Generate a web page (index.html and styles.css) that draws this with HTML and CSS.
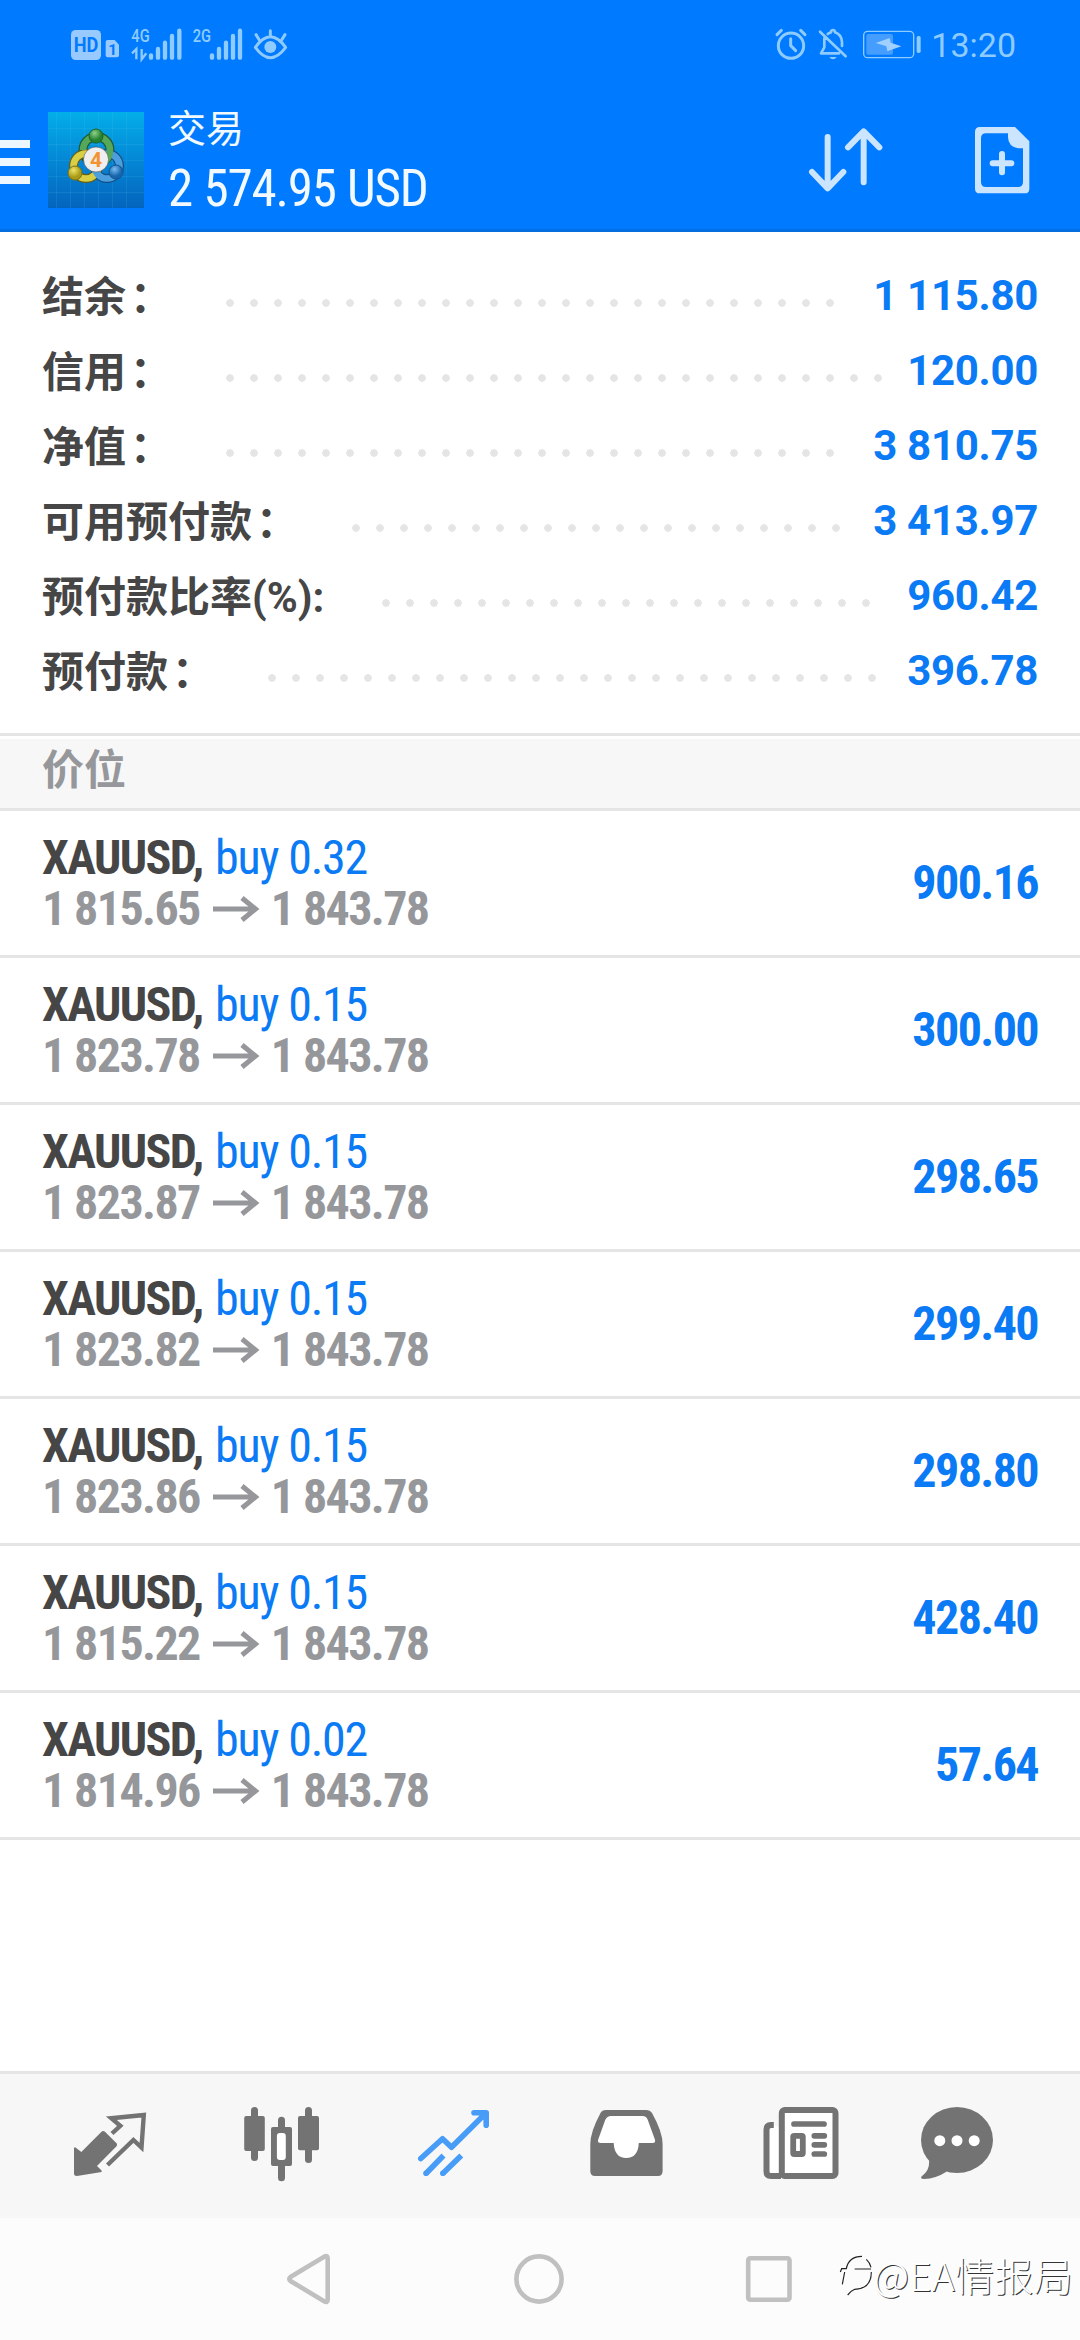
FILE: index.html
```html
<!DOCTYPE html>
<html lang="zh-CN">
<head>
    <meta charset="UTF-8">
    <meta name="viewport" content="width=device-width, initial-scale=1.0">
    <title>交易</title>
    <link rel="stylesheet" href="styles.css">
</head>
<body>
    <div class="screen">
        <header class="top">
            <div class="status-bar">
                <div class="status-left">
                    <svg class="s-hd" viewBox="213 81 90 102">
                        <rect x="213" y="90" width="90" height="90" rx="14" fill="#99caff"/>
                        <text x="258" y="155" text-anchor="middle" font-size="58" font-weight="700" textLength="74" lengthAdjust="spacingAndGlyphs" fill="#007aff">HD</text>
                    </svg>
                    <svg class="s-sim" viewBox="315 81 45 102">
                        <path d="M323 120H344L357 134V166Q357 172 351 172H323Q317 172 317 166V126Q317 120 323 120Z" fill="#99caff"/>
                        <text x="338" y="165" text-anchor="middle" font-size="46" font-weight="700" fill="#007aff">1</text>
                    </svg>
                    <svg class="s-4g" viewBox="393 81 156 102">
                        <text x="394" y="127" font-size="55" font-weight="500" textLength="55" lengthAdjust="spacingAndGlyphs" fill="#8ecbff">4G</text>
                        <path d="M396 160L409 147V178M425 147V178L439 160" fill="none" stroke="#8ecbff" stroke-width="7"/>
                        <path d="M453 166V173M474 147V173M495 128V173M516 108V173M538 92V173" stroke="#8ecbff" stroke-width="13" stroke-linecap="round"/>
                    </svg>
                    <svg class="s-2g" viewBox="576 81 156 102">
                        <text x="578" y="127" font-size="55" font-weight="500" textLength="55" lengthAdjust="spacingAndGlyphs" fill="#8ecbff">2G</text>
                        <path d="M636 166V173M657 147V173M678 128V173M699 108V173M720 92V173" stroke="#8ecbff" stroke-width="13" stroke-linecap="round"/>
                    </svg>
                    <svg class="s-eye" viewBox="759 81 105 102">
                        <path d="M766 142Q811 78 857 142Q811 204 766 142ZM768 104L778 120M811 92V106M855 104L845 120" fill="none" stroke="#8ecbff" stroke-width="9" stroke-linecap="round" stroke-linejoin="round"/>
                        <circle cx="811" cy="141" r="18" fill="#8ecbff"/>
                    </svg>
                </div>
                <div class="status-right">
                    <svg class="s-alarm" viewBox="102 81 96 102">
                        <circle cx="150" cy="137" r="38" fill="none" stroke="#8ecbff" stroke-width="9"/>
                        <path d="M149 116V137L164 152M108 104L121 91M192 104L179 91" fill="none" stroke="#8ecbff" stroke-width="9" stroke-linecap="round"/>
                    </svg>
                    <svg class="s-bell" viewBox="231 81 90 102">
                        <path d="M250 115V142L240 160H294M260 102Q265 98 270 97Q270 90 276 90Q282 90 282 97Q302 104 303 126V138M237 95L314 169" fill="none" stroke="#8ecbff" stroke-width="8" stroke-linecap="round" stroke-linejoin="round"/>
                        <path d="M265 171H287Q283 178 276 178Q269 178 265 171Z" fill="#8ecbff"/>
                    </svg>
                    <svg class="s-battery" viewBox="366 81 174 102">
                        <rect x="368" y="94" width="150" height="79" rx="12" fill="none" stroke="#8ecbff" stroke-width="4"/>
                        <rect x="376" y="102" width="80" height="62" rx="6" fill="#459dff"/>
                        <path d="M404 129L446 114L449 128L481 139L439 154L436 139Z" fill="#9fd0ff"/>
                        <rect x="527" y="108" width="12" height="51" rx="5" fill="#8ecbff"/>
                    </svg>
                    <span class="clock">13:20</span>
                </div>
            </div>
            <div class="toolbar">
                <div class="menu"><i></i><i></i><i></i></div>
                <svg class="logo" viewBox="0 0 96 96">
                    <defs>
                        <linearGradient id="sky" x1="0" y1="0" x2="0" y2="1">
                            <stop offset="0" stop-color="#03aee8"/>
                            <stop offset="0.5" stop-color="#0487d6"/>
                            <stop offset="1" stop-color="#0464bd"/>
                        </linearGradient>
                        <radialGradient id="green" cx="0.4" cy="0.3"><stop offset="0" stop-color="#8ed08a"/><stop offset="1" stop-color="#23812f"/></radialGradient>
                        <radialGradient id="yellow" cx="0.4" cy="0.3"><stop offset="0" stop-color="#efe468"/><stop offset="1" stop-color="#aa9a18"/></radialGradient>
                        <radialGradient id="blue" cx="0.4" cy="0.3"><stop offset="0" stop-color="#78bdf0"/><stop offset="1" stop-color="#1765ae"/></radialGradient>
                    </defs>
                    <rect width="96" height="96" fill="url(#sky)"/>
                    <path d="M8.500 0V96M22.500 0V96M36.500 0V96M50.500 0V96M64.500 0V96M78.500 0V96M0 16.500H96M0 32.500H96M0 48.500H96M0 64.500H96M0 80.500H96" stroke="#5cc4f0" stroke-opacity="0.14" fill="none"/>
                    <circle cx="48.500" cy="38" r="13.500" fill="none" stroke="#1e5a34" stroke-width="9"/>
                    <circle cx="38" cy="54" r="12.500" fill="none" stroke="#655f15" stroke-width="9"/>
                    <circle cx="59" cy="54" r="12.500" fill="none" stroke="#154f86" stroke-width="9"/>
                    <circle cx="38" cy="54" r="12.500" fill="none" stroke="#d9cf45" stroke-width="6.500"/>
                    <circle cx="59" cy="54" r="12.500" fill="none" stroke="#4a9fdc" stroke-width="6.500"/>
                    <path d="M35 38A13.500 13.500 0 0 1 62 38Q62 46 56 50" fill="none" stroke="#55a85a" stroke-width="6.500"/>
                    <circle cx="48" cy="24" r="7" fill="url(#green)" stroke="#1c6427"/>
                    <circle cx="27" cy="61" r="7" fill="url(#yellow)" stroke="#7d7312"/>
                    <circle cx="68" cy="60" r="7" fill="url(#blue)" stroke="#14548f"/>
                    <circle cx="48" cy="47.500" r="12.500" fill="#efefef" stroke="#555" stroke-width="0.600"/>
                    <text x="48" y="55" text-anchor="middle" font-size="21" font-weight="700" fill="#f39331">4</text>
                </svg>
                <div class="title">
                    <div class="title-name">交易</div>
                    <div class="title-sum condensed">2 574.95 USD</div>
                </div>
                <svg class="sort" viewBox="208 380 222 198">
                    <path d="M264 410V560M217 515L264 564L311 515M372 546V396M325 441L372 393L419 441" fill="none" stroke="#cce5ff" stroke-width="18" stroke-linecap="round" stroke-linejoin="round"/>
                </svg>
                <svg class="new-order" viewBox="702 377 168 204">
                    <path fill-rule="evenodd" d="M720 380H825L868 423V565Q868 579 854 579H720Q705 579 705 565V395Q705 380 720 380ZM738 399Q723 399 723 414V545Q723 560 738 560H834Q849 560 849 545V444H835Q805 440 804 411V399Z" fill="#cce5ff"/>
                    <path d="M786 461V516M758 489H814" stroke="#cce5ff" stroke-width="18" stroke-linecap="round"/>
                </svg>
            </div>
        </header>

        <section class="account">
            <div class="line"><span class="label">结余<span class="colon">：</span></span><i class="dots"></i><span class="amount">1 115.80</span></div>
            <div class="line"><span class="label">信用<span class="colon">：</span></span><i class="dots"></i><span class="amount">120.00</span></div>
            <div class="line"><span class="label">净值<span class="colon">：</span></span><i class="dots"></i><span class="amount">3 810.75</span></div>
            <div class="line"><span class="label">可用预付款<span class="colon">：</span></span><i class="dots"></i><span class="amount">3 413.97</span></div>
            <div class="line"><span class="label">预付款比率(%):</span><i class="dots"></i><span class="amount">960.42</span></div>
            <div class="line"><span class="label">预付款<span class="colon">：</span></span><i class="dots"></i><span class="amount">396.78</span></div>
        </section>

        <h2 class="section-title">价位</h2>

        <ul class="positions">
            <li class="position">
                <div class="info condensed">
                    <div><b>XAUUSD,</b> <span class="side">buy 0.32</span></div>
                    <div class="prices">1 815.65<svg class="arrow" viewBox="0 0 46 26"><path d="M0 13H43M29 2L42.500 13L29 24"/></svg>1 843.78</div>
                </div>
                <div class="profit condensed">900.16</div>
            </li>
            <li class="position">
                <div class="info condensed">
                    <div><b>XAUUSD,</b> <span class="side">buy 0.15</span></div>
                    <div class="prices">1 823.78<svg class="arrow" viewBox="0 0 46 26"><path d="M0 13H43M29 2L42.500 13L29 24"/></svg>1 843.78</div>
                </div>
                <div class="profit condensed">300.00</div>
            </li>
            <li class="position">
                <div class="info condensed">
                    <div><b>XAUUSD,</b> <span class="side">buy 0.15</span></div>
                    <div class="prices">1 823.87<svg class="arrow" viewBox="0 0 46 26"><path d="M0 13H43M29 2L42.500 13L29 24"/></svg>1 843.78</div>
                </div>
                <div class="profit condensed">298.65</div>
            </li>
            <li class="position">
                <div class="info condensed">
                    <div><b>XAUUSD,</b> <span class="side">buy 0.15</span></div>
                    <div class="prices">1 823.82<svg class="arrow" viewBox="0 0 46 26"><path d="M0 13H43M29 2L42.500 13L29 24"/></svg>1 843.78</div>
                </div>
                <div class="profit condensed">299.40</div>
            </li>
            <li class="position">
                <div class="info condensed">
                    <div><b>XAUUSD,</b> <span class="side">buy 0.15</span></div>
                    <div class="prices">1 823.86<svg class="arrow" viewBox="0 0 46 26"><path d="M0 13H43M29 2L42.500 13L29 24"/></svg>1 843.78</div>
                </div>
                <div class="profit condensed">298.80</div>
            </li>
            <li class="position">
                <div class="info condensed">
                    <div><b>XAUUSD,</b> <span class="side">buy 0.15</span></div>
                    <div class="prices">1 815.22<svg class="arrow" viewBox="0 0 46 26"><path d="M0 13H43M29 2L42.500 13L29 24"/></svg>1 843.78</div>
                </div>
                <div class="profit condensed">428.40</div>
            </li>
            <li class="position">
                <div class="info condensed">
                    <div><b>XAUUSD,</b> <span class="side">buy 0.02</span></div>
                    <div class="prices">1 814.96<svg class="arrow" viewBox="0 0 46 26"><path d="M0 13H43M29 2L42.500 13L29 24"/></svg>1 843.78</div>
                </div>
                <div class="profit condensed">57.64</div>
            </li>
        </ul>

        <nav class="tabs">
            <!-- quotes -->
            <svg viewBox="70 46 80 80">
                <path d="M74 87.500H75.500L81.300 92L101.500 71.700Q103 70.300 104.700 71.500L116.800 83.500Q117.500 85 116.500 86.200L97 106L101.600 110.500V112L77 116Q74 116 74 113.500Z" fill="#737373"/>
                <path d="M112 73.500L120.300 65.800L111.300 58.200L143.800 55L141.500 87.500L133.400 80L107.500 105" fill="none" stroke="#737373" stroke-width="4.400"/>
            </svg>
            <!-- charts -->
            <svg viewBox="242 46 80 80">
                <g fill="#737373">
                    <rect x="251" y="47" width="7" height="54" rx="3.500"/>
                    <rect x="244.200" y="56" width="20.600" height="35" rx="2"/>
                    <rect x="305" y="47" width="7" height="56" rx="3.500"/>
                    <rect x="298" y="56" width="21" height="34.300" rx="2"/>
                    <rect x="278" y="56.700" width="7" height="64.500" rx="3.500"/>
                    <rect x="271" y="67" width="21" height="39" rx="2"/>
                </g>
                <rect x="276.900" y="73" width="8.900" height="27" rx="3" fill="#fff"/>
            </svg>
            <!-- trade -->
            <svg viewBox="414 46 80 80">
                <g fill="none" stroke="#479cf7" stroke-width="5.600" stroke-linejoin="round">
                    <path d="M420.800 98.500L442.500 78.700L451.500 87.300L485.500 53.500M474 52.700H486.200V65.200" stroke-linecap="round"/>
                    <path d="M426 113.500L443.500 95.500M442.800 113.500L461.300 95.500"/>
                </g>
                <circle cx="426" cy="113.300" r="2.800" fill="#479cf7"/>
                <circle cx="442.800" cy="113.300" r="2.800" fill="#479cf7"/>
            </svg>
            <!-- history -->
            <svg viewBox="586 46 80 80">
                <path d="M606 50H646Q650 50 652 53Q662.600 72 662.600 84V111Q662.600 116 658 116H595Q590.300 116 590.300 111V84Q590.300 72 600.500 53Q602 50 606 50Z" fill="#737373"/>
                <path d="M611 56H642.500Q646.500 56 647.800 60L654.900 79.500Q656 83 652.500 83H638.800Q638 98 626.200 98Q614.500 98 613.700 83H601Q597 83 598.200 79.500L605.200 60Q607 56 611 56Z" fill="#fff"/>
            </svg>
            <!-- news -->
            <svg viewBox="757 46 80 80">
                <path d="M772.800 65H770Q765.500 65 765.500 69.500V111.500Q765.500 116 770 116H780V68Z" fill="#fff"/>
                <path d="M772.800 65H770Q765.500 65 765.500 69.500V111.500Q765.500 116 770 116H780" fill="none" stroke="#737373" stroke-width="6"/>
                <rect x="780.800" y="50" width="53.700" height="66" rx="3" fill="#fff" stroke="#737373" stroke-width="6"/>
                <path d="M793 64H823M813.300 75.800H823.300M813.300 84.800H823.300M813.300 94H823.300" stroke="#737373" stroke-width="5.700" stroke-linecap="round"/>
                <rect x="792.200" y="75.800" width="9.600" height="18.200" rx="1" fill="#fff" stroke="#737373" stroke-width="5.800"/>
            </svg>
            <!-- messages -->
            <svg viewBox="917 46 80 80">
                <ellipse cx="958" cy="80" rx="36" ry="33" fill="#737373"/>
                <path d="M929 98L930.200 101Q930.500 111 922.500 116.500Q921 119 925 119Q937 118.500 947.400 111.700L955 98Z" fill="#737373"/>
                <g fill="#fff">
                    <circle cx="940.800" cy="80.700" r="5.500"/>
                    <circle cx="958" cy="80.700" r="5.500"/>
                    <circle cx="975.200" cy="80.700" r="5.500"/>
                </g>
            </svg>
        </nav>

        <footer class="system-nav">
            <svg viewBox="283 194 50 50"><path d="M290.500 217Q288 219 290.500 221L324.500 241.500Q327.700 243 327.700 239.500V198.500Q327.700 195 324.500 196.500Z"/></svg>
            <svg viewBox="515 194 50 50"><circle cx="540" cy="219" r="22.600"/></svg>
            <svg viewBox="744 194 50 50"><rect x="748.200" y="198.200" width="41.300" height="41.600" rx="2"/></svg>
        </footer>

        <div class="watermark">
            <svg viewBox="50 90 105 135">
                <path d="M57 150L61 140H75Q82 103 122 103M135 112Q146 122 149 136M100 141H149M70 150L63 187M150 150Q150 200 100 202Q90 206 79 219" fill="none" stroke="#222" stroke-width="3.500"/>
            </svg>
            <span>@EA情报局</span>
        </div>
    </div>
</body>
</html>
```

FILE: styles.css
```css
* {
    box-sizing: border-box;
}
body {
    margin: 0;
    background: #fff;
    font-family: Roboto, "Noto Sans CJK SC", sans-serif;
    color: #464646;
}
svg {
    display: block;
    flex: none;
    overflow: visible;
}
.screen {
    position: relative;
    width: 1080px;
    height: 2340px;
    display: flex;
    flex-direction: column;
    overflow: hidden;
}
.condensed {
    font-family: "Roboto Condensed", Roboto, sans-serif;
    font-stretch: 75%;
    letter-spacing: -1.6px;
}

/* header */
.top {
    height: 232px;
    background: #007aff;
    border-bottom: 3px solid #046fe0;
}
.status-bar {
    height: 88px;
    padding: 0 64px 0 71px;
    display: flex;
    justify-content: space-between;
    align-items: center;
}
.status-left, .status-right {
    display: flex;
    align-items: center;
    height: 34px;
}
.status-bar svg {
    height: 34px;
}
.s-hd {
    width: 30px;
}
.s-sim {
    width: 15px;
    margin-left: 4px;
}
.s-4g {
    width: 52px;
    margin-left: 11px;
}
.s-2g {
    width: 52px;
    margin-left: 9px;
}
.s-eye {
    width: 35px;
    margin-left: 9px;
}
.s-alarm {
    width: 32px;
}
.s-bell {
    width: 30px;
    margin-left: 11px;
}
.s-battery {
    width: 58px;
    margin-left: 15px;
}
.clock {
    margin-left: 10px;
    padding-top: 2px;
    font-size: 34px;
    line-height: 34px;
    color: #8ecbff;
}
.toolbar {
    height: 141px;
    display: flex;
    align-items: flex-start;
    padding-top: 24px;
}
.menu {
    width: 30px;
    margin: 28px 18px 0 0;
    display: flex;
    flex-direction: column;
    gap: 10px;
}
.menu i {
    height: 8px;
    background: #ebf6ff;
}
.logo {
    width: 96px;
    height: 96px;
}
.title {
    flex: 1;
    margin-left: 24px;
    color: #f2faff;
}
.title-name {
    font-size: 38px;
    line-height: 44px;
    margin-top: -5px;
}
.title-sum {
    font-size: 51px;
    line-height: 60px;
    margin-top: 8px;
    letter-spacing: -1.200px;
    word-spacing: 1px;
}
.sort {
    width: 74px;
    height: 66px;
    margin: 15px 91px 0 0;
}
.new-order {
    width: 56px;
    height: 68px;
    margin: 14px 50px 0 0;
}

/* account summary */
.account {
    height: 501px;
    padding: 26px 42px 0;
}
.line {
    height: 75px;
    display: flex;
    align-items: center;
    font-size: 42px;
    font-weight: 700;
    line-height: 75px;
    white-space: nowrap;
}
.label {
    padding-top: 3px;
}
.colon {
    margin: 0 -4px 0 4px;
}
.dots {
    flex: 1;
    height: 8px;
    margin: 14px 23px 0 58px;
    background: radial-gradient(circle at 4px 4px, #e5e5e5 3.500px, transparent 4px) 0 0 / 24px 8px repeat-x;
}
.amount {
    color: #0a7af5;
    letter-spacing: -0.300px;
}
.section-title {
    height: 78px;
    margin: 0;
    padding: 0 42px;
    border-top: 3px solid #e5e5e5;
    border-bottom: 3px solid #e5e5e5;
    background: #f7f7f7;
    box-shadow: inset 0 3px #fff;
    font-size: 42px;
    font-weight: 700;
    line-height: 70px;
    color: #96979b;
}

/* open positions */
.positions {
    flex: 1;
    margin: 0;
    padding: 0;
    list-style: none;
}
.position {
    height: 147px;
    padding: 0 42px;
    border-bottom: 3px solid #e5e5e5;
    display: flex;
    justify-content: space-between;
    align-items: center;
    font-size: 48px;
    line-height: 51px;
}
.side {
    margin-left: 3px;
    letter-spacing: -1.200px;
    color: #0a7af5;
}
.prices {
    display: flex;
    align-items: center;
    font-weight: 700;
    color: #96979b;
}
.arrow {
    width: 46px;
    height: 26px;
    margin: 0 12px 0 13px;
}
.arrow path {
    fill: none;
    stroke: #96979b;
    stroke-width: 5;
}
.profit {
    padding-bottom: 2px;
    font-weight: 700;
    color: #0a7af5;
}

/* bottom bars */
.tabs {
    height: 147px;
    padding: 0 50px 0 24px;
    border-top: 3px solid #e5e5e5;
    background: #f7f7f7;
    display: grid;
    grid-template-columns: repeat(5, 172px) 144px;
    justify-items: center;
    align-items: center;
}
.tabs svg {
    width: 80px;
    height: 80px;
}
.system-nav {
    height: 122px;
    padding: 0 286px 0 283px;
    background: #fcfcfc;
    display: flex;
    justify-content: space-between;
    align-items: center;
}
.system-nav svg {
    width: 50px;
    height: 50px;
    fill: none;
    stroke: #c0c0c0;
    stroke-width: 4.600px;
}
.watermark {
    position: absolute;
    right: 7px;
    bottom: 41px;
    display: flex;
    align-items: center;
    font-size: 39px;
    font-weight: 300;
    line-height: 50px;
    letter-spacing: 0.300px;
    font-family: "Noto Sans CJK SC", sans-serif;
    color: #fff;
    text-shadow: 1px 1px 0 #333;
}
.watermark svg {
    width: 35px;
    height: 45px;
}
```
